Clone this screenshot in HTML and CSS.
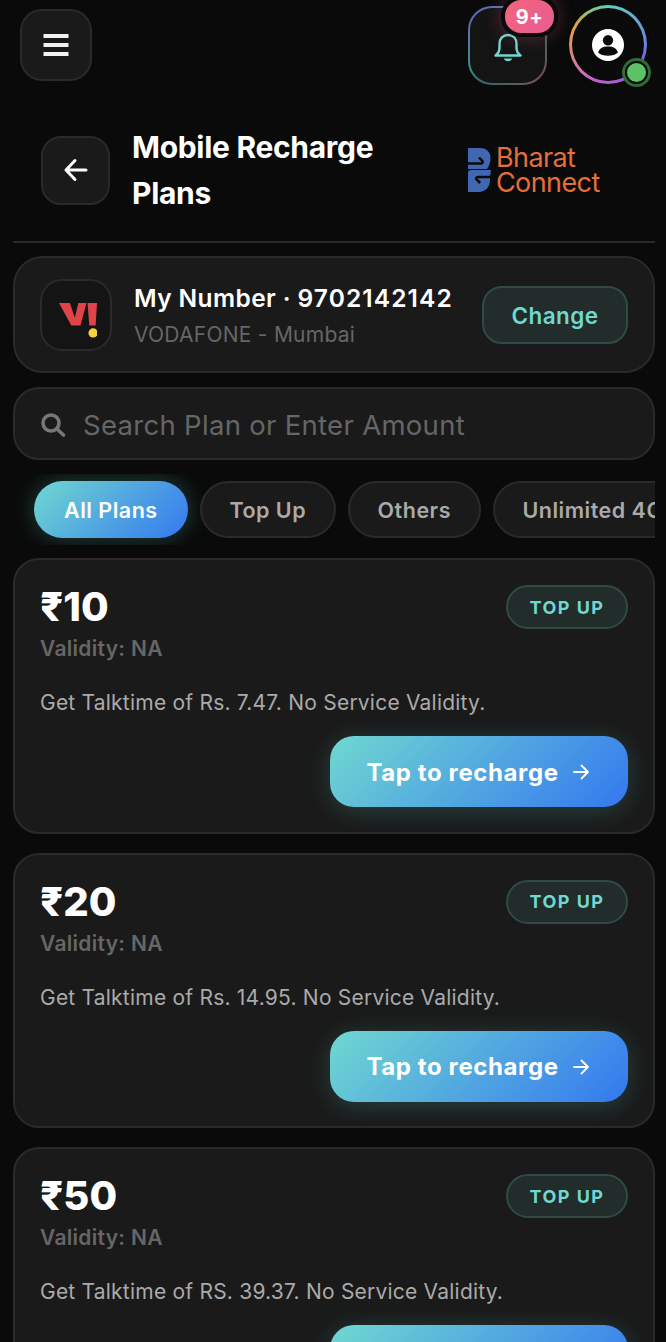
FILE: index.html
```html
<!DOCTYPE html>
<html lang="en">
<head>
    <meta charset="UTF-8">
    <meta name="viewport" content="width=device-width, initial-scale=1.0">
    <title>Mobile Recharge Plans</title>
    <link rel="stylesheet" href="styles.css">
</head>
<body>
    <header class="topbar">
        <button class="icon-btn menu-btn" aria-label="Menu">
            <svg width="26" height="24" viewBox="0 0 26 24"><path d="M0.500 3h25M0.500 12h25M0.500 21h25" stroke="#f2f2f2" stroke-width="4" fill="none"/></svg>
        </button>
        <div class="topbar-right">
            <div class="bell">
                <svg width="30" height="30" viewBox="0 0 30 30" fill="none" stroke="#6fd8cf" stroke-width="2.400" stroke-linejoin="round"><path d="M2.500 22.500c2.500-2 4-4 4-7.500v-4C6.500 5.500 10 2 15 2s8.500 3.500 8.500 9v4c0 3.500 1.500 5.500 4 7.500z"/><path d="M11 25.500h8c-.5 3.500-7.500 3.500-8 0z" fill="#6fd8cf" stroke="none"/></svg>
                <span class="badge">9+</span>
            </div>
            <div class="avatar">
                <div class="avatar-inner">
                    <svg width="32" height="32" viewBox="0 0 34 34"><circle cx="17" cy="17" r="17" fill="#fff"/><circle cx="17" cy="12" r="5.500" fill="#0a0a0a"/><path d="M6.500 25c1-4.500 5-6.500 10.500-6.500s9.500 2 10.500 6.500c-2.500 2.500-6 3.500-10.500 3.500s-8-1-10.500-3.500z" fill="#0a0a0a"/></svg>
                </div>
                <span class="online"></span>
            </div>
        </div>
    </header>

    <section class="title-row">
        <button class="icon-btn back-btn" aria-label="Back">
            <svg width="26" height="26" viewBox="0 0 26 26" fill="none" stroke="#fff" stroke-width="3" stroke-linecap="round" stroke-linejoin="round"><path d="M23 13H3M12 3.500L3 13l9 9.500"/></svg>
        </button>
        <h1>Mobile Recharge Plans</h1>
        <div class="bharat">
            <svg width="24" height="44" viewBox="0 0 24 44">
                <path fill="#4267b2" d="M0 0h12c7 0 10.500 4.500 10.500 10 0 4-1 7.500-3.500 11H0z"/>
                <path fill="none" stroke="#0a0a0a" stroke-width="2.500" d="M-1 15.500h14c1.800 0 2.300-1.500 1.200-2.700L11 9.500"/>
                <path fill="#4267b2" d="M3 22h20l-1 7v3c0 7-4.500 12-11 12H0V25c0-2 1-3 3-3z"/>
                <path fill="none" stroke="#0a0a0a" stroke-width="2.500" d="M25 29h-15c-1.800 0-2.300 1.500-1.200 2.700l3.400 3.300"/>
            </svg>
            <div class="bharat-text">Bharat<br>Connect</div>
        </div>
    </section>

    <main class="content">
        <div class="number-card">
            <div class="op-logo">
                <svg width="38" height="35" viewBox="0 0 36 33"><path fill="#e0444a" d="M0 0h10.300L15 14l3.300-14H26l-5.700 21.300h-8.600zM27 0h9l-1.300 21.300h-6z"/><circle cx="32.300" cy="28.300" r="4.400" fill="#f7d23e"/></svg>
            </div>
            <div class="number-info">
                <div class="number-line">My Number · <span class="digits">9702142142</span></div>
                <div class="operator">VODAFONE - Mumbai</div>
            </div>
            <button class="change-btn">Change</button>
        </div>

        <div class="search">
            <svg width="26" height="26" viewBox="0 0 26 26" fill="none" stroke="#777" stroke-width="3.600" stroke-linecap="round"><circle cx="11" cy="11" r="8"/><path d="M17 17l6.500 6"/></svg>
            <span>Search Plan or Enter Amount</span>
        </div>

        <div class="chips">
            <div class="chip active">All Plans</div>
            <div class="chip">Top Up</div>
            <div class="chip">Others</div>
            <div class="chip">Unlimited 4G</div>
        </div>

        <article class="plan">
            <div class="plan-top">
                <div>
                    <div class="price">₹10</div>
                    <div class="validity">Validity: NA</div>
                </div>
                <span class="tag">TOP UP</span>
            </div>
            <p class="desc">Get Talktime of Rs. 7.47. No Service Validity.</p>
            <div class="plan-foot">
                <button class="recharge">Tap to recharge
                    <svg width="18" height="18" viewBox="0 0 18 18" fill="none" stroke="#fff" stroke-width="1.800" stroke-linecap="round" stroke-linejoin="round"><path d="M2 9h14M9.500 2.500L16 9l-6.500 6.500"/></svg>
                </button>
            </div>
        </article>

        <article class="plan">
            <div class="plan-top">
                <div>
                    <div class="price">₹20</div>
                    <div class="validity">Validity: NA</div>
                </div>
                <span class="tag">TOP UP</span>
            </div>
            <p class="desc">Get Talktime of Rs. 14.95. No Service Validity.</p>
            <div class="plan-foot">
                <button class="recharge">Tap to recharge
                    <svg width="18" height="18" viewBox="0 0 18 18" fill="none" stroke="#fff" stroke-width="1.800" stroke-linecap="round" stroke-linejoin="round"><path d="M2 9h14M9.500 2.500L16 9l-6.500 6.500"/></svg>
                </button>
            </div>
        </article>

        <article class="plan">
            <div class="plan-top">
                <div>
                    <div class="price">₹50</div>
                    <div class="validity">Validity: NA</div>
                </div>
                <span class="tag">TOP UP</span>
            </div>
            <p class="desc">Get Talktime of RS. 39.37. No Service Validity.</p>
            <div class="plan-foot">
                <button class="recharge">Tap to recharge
                    <svg width="18" height="18" viewBox="0 0 18 18" fill="none" stroke="#fff" stroke-width="1.800" stroke-linecap="round" stroke-linejoin="round"><path d="M2 9h14M9.500 2.500L16 9l-6.500 6.500"/></svg>
                </button>
            </div>
        </article>
    </main>
</body>
</html>
```

FILE: styles.css
```css
html {
    height: 100%;
    overflow: hidden;
}

body {
    margin: 0;
    height: 100%;
    overflow: hidden;
    background-color: #0a0a0a;
    color: #fff;
    font-family: Inter, "Liberation Sans", sans-serif;
}

button {
    font-family: inherit;
    cursor: pointer;
}

.icon-btn {
    display: flex;
    align-items: center;
    justify-content: center;
    padding: 0;
    background-color: #1a1a1a;
    border: 2px solid #2a2a2a;
}

/* top bar */
.topbar {
    display: flex;
    justify-content: space-between;
    align-items: flex-start;
    height: 86px;
    padding: 5px 19px 0 20px;
    box-sizing: border-box;
}

.menu-btn {
    width: 72px;
    height: 72px;
    margin-top: 4px;
    border-radius: 22px;
}

.topbar-right {
    display: flex;
    gap: 22px;
}

.bell {
    position: relative;
    display: flex;
    align-items: center;
    justify-content: center;
    width: 79px;
    height: 79px;
    margin-top: 1px;
    box-sizing: border-box;
    border-radius: 24px;
    border: 2px solid transparent;
    background:
        linear-gradient(#141414, #141414) padding-box,
        linear-gradient(135deg, #6a5fc0 0%, #3d8f88 40%, #2f6a66 60%, #8a4a4a 100%) border-box;
}

.bell svg {
    margin-top: 4px;
}

.badge {
    position: absolute;
    top: -12px;
    right: -13px;
    width: 49px;
    height: 33px;
    border: 4px solid #0a0a0a;
    border-radius: 20px;
    display: flex;
    align-items: center;
    justify-content: center;
    background: linear-gradient(135deg, #f2657a, #e85c94);
    font-size: 20px;
    font-weight: 700;
    letter-spacing: 0.5px;
    box-shadow: 0 0 18px rgba(236, 96, 140, 0.3);
}

.avatar {
    position: relative;
    width: 78px;
    height: 79px;
}

.avatar-inner {
    width: 100%;
    height: 100%;
    box-sizing: border-box;
    border-radius: 50%;
    border: 3px solid transparent;
    display: flex;
    align-items: center;
    justify-content: center;
    background:
        linear-gradient(#0a0a0a, #0a0a0a) padding-box,
        conic-gradient(#5fd0c0, #6a8fe0 22%, #7a5fe0 32%, #c060d0 55%, #d878a8 65%, #e8a040 82%, #90c070 92%, #5fd0c0) border-box;
}

.online {
    position: absolute;
    right: -1px;
    bottom: 0;
    width: 19px;
    height: 19px;
    background-color: #5cc265;
    border: 2px solid #0a0a0a;
    border-radius: 50%;
    box-shadow: 0 0 0 3px #2f6b36;
}

/* page title */
.title-row {
    display: flex;
    align-items: center;
    height: 157px;
    margin: 0 11px 0 13px;
    padding: 13px 0 0 28px;
    box-sizing: border-box;
    border-bottom: 2px solid #2a2a2a;
}

.back-btn {
    flex: none;
    width: 69px;
    height: 69px;
    border-radius: 20px;
}

h1 {
    flex: none;
    width: 290px;
    margin: 0 0 0 22px;
    font-size: 30px;
    font-weight: 700;
    line-height: 46px;
    letter-spacing: -0.3px;
}

.bharat {
    display: flex;
    align-items: center;
    gap: 4px;
    margin-left: 46px;
}

.bharat-text {
    color: #e46f3a;
    font-size: 27px;
    line-height: 25px;
    letter-spacing: -0.6px;
}

/* main column */
.content {
    display: flex;
    flex-direction: column;
    margin: 13px 11px 0 13px;
}

.number-card {
    display: flex;
    align-items: center;
    height: 117px;
    padding: 0 25px;
    box-sizing: border-box;
    background-color: #1a1a1a;
    border: 2px solid #2a2a2a;
    border-radius: 30px;
}

.op-logo {
    flex: none;
    display: flex;
    align-items: center;
    justify-content: center;
    width: 72px;
    height: 72px;
    box-sizing: border-box;
    background-color: #141414;
    border: 2px solid #2a2a2a;
    border-radius: 22px;
}

.op-logo svg {
    margin: 12px 0 0 3px;
}

.number-info {
    flex: 1;
    margin-left: 22px;
}

.number-line {
    font-size: 24.500px;
    font-weight: 600;
    line-height: 36px;
    letter-spacing: 0.4px;
}

.digits {
    letter-spacing: 1.100px;
}

.operator {
    margin-top: 4px;
    color: #666;
    font-size: 21px;
    line-height: 30px;
    letter-spacing: 0.25px;
}

.change-btn {
    width: 146px;
    height: 58px;
    padding: 1px 0 0;
    background-color: #222c2b;
    border: 2px solid #2f4a47;
    border-radius: 20px;
    color: #6fd8cf;
    font-size: 22.500px;
    font-weight: 600;
    letter-spacing: 0.4px;
}

.search {
    display: flex;
    align-items: center;
    gap: 17px;
    height: 73px;
    margin-top: 14px;
    padding: 2px 25px 0;
    box-sizing: border-box;
    background-color: #1a1a1a;
    border: 2px solid #2a2a2a;
    border-radius: 26px;
    color: #666;
    font-size: 27.500px;
    letter-spacing: 0.3px;
}

.chips {
    display: flex;
    gap: 12px;
    margin-top: 14px;
    padding: 7px 0 7px 21px;
    overflow: hidden;
}

.chip {
    flex: none;
    display: flex;
    align-items: center;
    height: 57px;
    padding: 0 27.750px;
    box-sizing: border-box;
    background-color: #1a1a1a;
    border: 2px solid #2a2a2a;
    border-radius: 29px;
    color: #aaa;
    font-size: 21.500px;
    font-weight: 600;
    letter-spacing: 0.5px;
}

.chip.active {
    border: none;
    padding: 0 30px;
    color: #fff;
    background: linear-gradient(135deg, #70d8d0, #3478f0);
    box-shadow: 0 0 22px rgba(90, 210, 200, 0.3);
}

/* plan cards */
.plan {
    flex: none;
    height: 275.500px;
    margin-top: 19px;
    padding: 26px 25px 0;
    box-sizing: border-box;
    background-color: #1a1a1a;
    border: 2px solid #2a2a2a;
    border-radius: 26px;
}

.chips + .plan {
    margin-top: 13px;
}

.plan-top {
    display: flex;
    justify-content: space-between;
    align-items: flex-start;
}

.price {
    font-size: 40px;
    font-weight: 800;
    line-height: 42px;
}

.validity {
    margin-top: 7px;
    color: #666;
    font-size: 21px;
    font-weight: 600;
    line-height: 28px;
    letter-spacing: 0.3px;
}

.tag {
    display: flex;
    align-items: center;
    justify-content: center;
    width: 122px;
    height: 44px;
    margin-top: -1px;
    box-sizing: border-box;
    background-color: #222c2b;
    border: 2px solid #2f4a47;
    border-radius: 22px;
    color: #6fd8cf;
    font-size: 18px;
    font-weight: 700;
    letter-spacing: 1.500px;
}

.desc {
    margin: 25px 0 0;
    color: #aaa;
    font-size: 21px;
    line-height: 30px;
    letter-spacing: 0.22px;
}

.plan-foot {
    display: flex;
    justify-content: flex-end;
    margin-top: 18px;
}

.recharge {
    display: flex;
    align-items: center;
    justify-content: center;
    gap: 13px;
    width: 298px;
    height: 71px;
    padding: 1px 2px 0 0;
    border: none;
    border-radius: 24px;
    background: linear-gradient(135deg, #70d8d0, #3478f0);
    box-shadow: 0 4px 24px rgba(90, 210, 200, 0.22);
    color: #fff;
    font-size: 24px;
    font-weight: 700;
    letter-spacing: 0.6px;
}
```
